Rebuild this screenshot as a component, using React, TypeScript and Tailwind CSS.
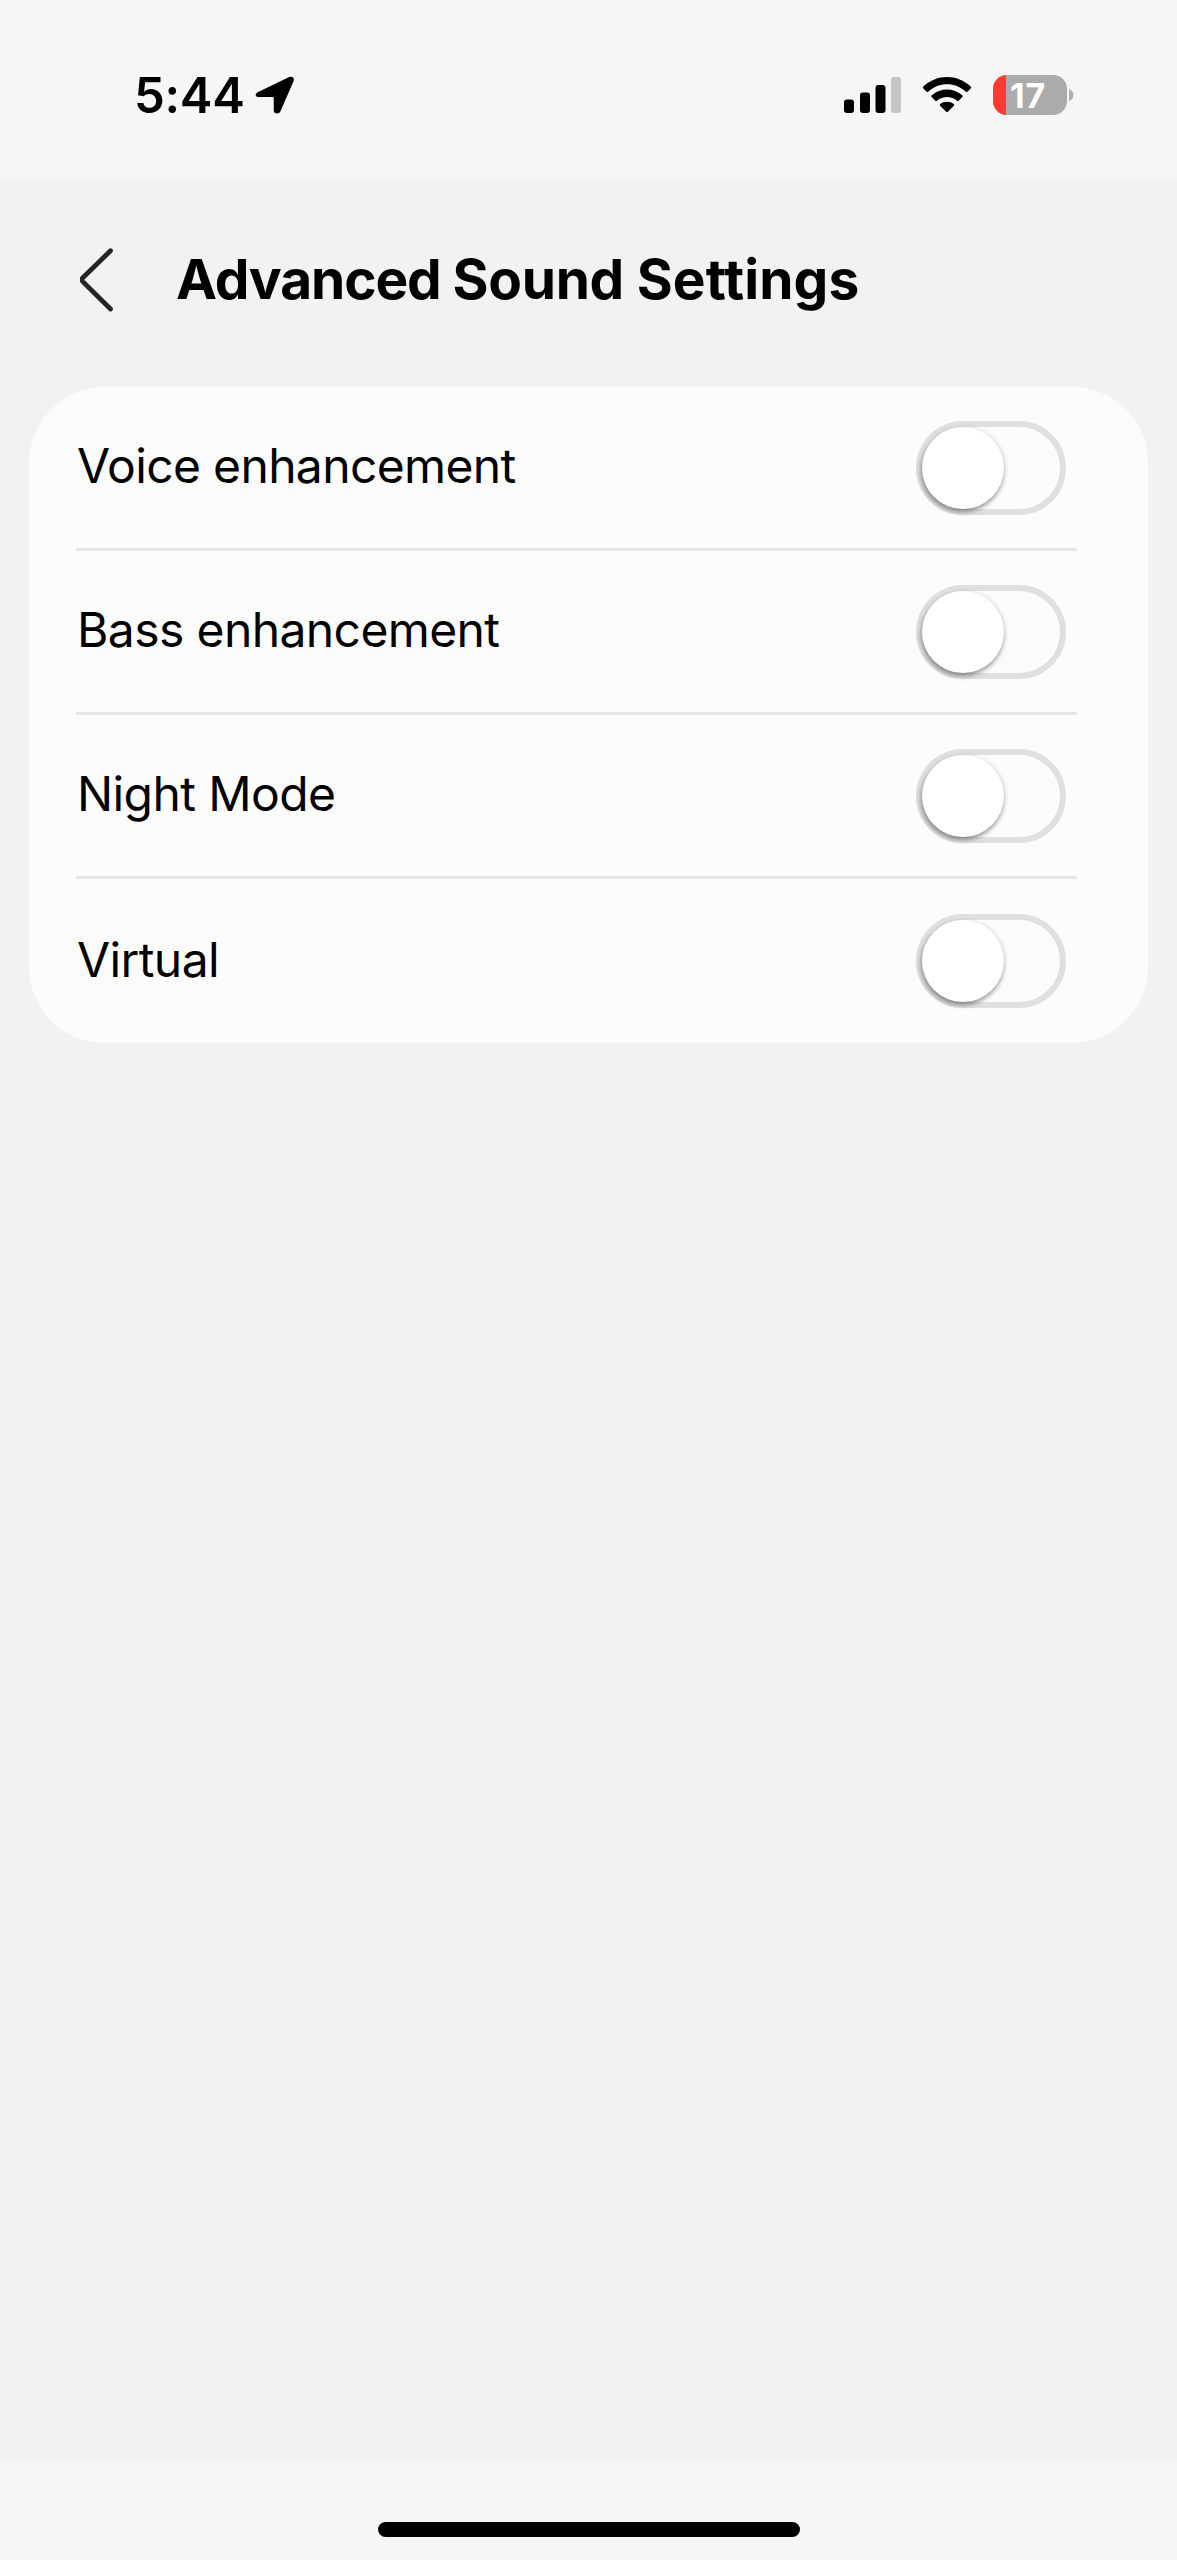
import { useState } from 'react';

type Setting = {
    id: string;
    label: string;
    labelClass: string;
};

const SETTINGS: Setting[] = [
    { id: 'voice', label: 'Voice enhancement', labelClass: 'tracking-[-0.65px]' },
    { id: 'bass', label: 'Bass enhancement', labelClass: 'tracking-[-0.6px]' },
    { id: 'night', label: 'Night Mode', labelClass: 'tracking-[-0.6px]' },
    { id: 'virtual', label: 'Virtual', labelClass: 'tracking-[-0.6px]' },
];

function StatusBar() {
    return (
        <header className="flex h-[181px] items-start justify-between bg-[#f6f6f6] pt-[75px] pr-[103px] pl-[134px]">
            <div className="flex h-10 items-center">
                <span className="pt-0.5 text-[49px] leading-10 font-semibold tracking-[-0.3px]">5:44</span>
                <svg className="ml-[10px] h-[38px] w-[40px]" viewBox="0 0 38 38" preserveAspectRatio="none">
                    <path
                        d="M3.500 15.800 32 1.200c3.400-1.500 6 .9 4.500 4.200L24.200 35.200c-1.400 3.500-6.400 2.700-6.400-1V22.300c0-.8-.4-1.200-1.200-1.200H4C-.2 21.100-.5 17.600 3.500 15.800Z"
                        fill="#000"
                    />
                </svg>
            </div>

            <div className="flex h-10 items-center">
                <svg className="h-9 w-[58px]" viewBox="0 0 58 36">
                    <rect x="0" y="22.500" width="10" height="13.500" rx="3" />
                    <rect x="16" y="15.500" width="10" height="20.500" rx="3" />
                    <rect x="31.500" y="8" width="10" height="28" rx="3" />
                    <rect x="47" y="0" width="10" height="36" rx="3" fill="#c4c4c4" />
                </svg>
                <svg className="ml-[20px] h-9 w-[50px]" viewBox="0 0 50 36">
                    <path d="M1.300 9.600C14.600-3.200 35.400-3.200 48.700 9.600c.6.600.6 1.100.1 1.600l-3.400 3.500c-.5.500-1 .5-1.600 0-10.700-9.900-26.900-9.900-37.600 0-.6.500-1.100.5-1.600 0l-3.400-3.500c-.5-.5-.5-1 .1-1.600Z" />
                    <path d="M9.800 18.300c8.600-7.700 21.800-7.700 30.400 0 .6.500.6 1.100.1 1.600l-3.700 3.800c-.5.500-1 .5-1.500.1-5.800-5-14.400-5-20.200 0-.5.400-1 .4-1.500-.1l-3.700-3.800c-.5-.5-.5-1.100.1-1.600Z" />
                    <path d="M18.200 27.100c4-3.200 9.600-3.200 13.600 0 .6.500.6 1 .1 1.600l-6 6.100c-.6.600-1.200.6-1.800 0l-6-6.100c-.5-.6-.5-1.100.1-1.600Z" />
                </svg>
                <div className="ml-[21px] flex h-10 w-[74px] items-center overflow-hidden rounded-[14px] bg-[#ababab]">
                    <div className="h-full w-[13px] bg-[#ff3b30]" />
                    <span className="ml-1 pt-px text-[34px] leading-10 font-bold tracking-[0.8px] text-white">17</span>
                </div>
                <svg className="ml-[2px] h-3 w-[5px]" viewBox="0 0 5 12">
                    <path d="M0 0c6 2 6 10 0 12Z" fill="#b0b0b0" />
                </svg>
            </div>
        </header>
    );
}

function Toggle({ label, checked, onChange }: { label: string; checked: boolean; onChange: () => void }) {
    return (
        <button
            type="button"
            role="switch"
            aria-checked={checked}
            aria-label={label}
            onClick={onChange}
            className={`flex h-[94px] w-[150px] shrink-0 items-center rounded-full border-[6px] ${
                checked ? 'justify-end border-[#34c759] bg-[#34c759]' : 'border-[#e0e0e0]'
            }`}
        >
            <span className="size-[82px] shrink-0 rounded-full bg-white shadow-[-1px_3px_5px_rgba(0,0,0,0.4),2px_0px_5px_rgba(0,0,0,0.07)]" />
        </button>
    );
}

export default function App() {
    const [enabled, setEnabled] = useState<Record<string, boolean>>({});

    const toggle = (id: string) => setEnabled((prev) => ({ ...prev, [id]: !prev[id] }));

    return (
        <div className="flex h-[2560px] w-[1177px] flex-col bg-[#f2f2f2] font-['Inter',sans-serif] text-black">
            <StatusBar />

            <main className="flex-1">
                <div className="flex h-[206px] items-center pb-[9px] pl-[80px]">
                    <button type="button" aria-label="Back">
                        <svg className="h-[64px] w-[34px]" viewBox="0 0 34 64" fill="none">
                            <path
                                d="M30.500 2.800 2.800 29.800Q.9 31.700 2.800 33.600L30.500 61"
                                stroke="#252525"
                                strokeWidth="4.800"
                                strokeLinecap="round"
                            />
                        </svg>
                    </button>
                    <h1 className="ml-[62px] text-[55px] leading-none font-bold whitespace-nowrap">
                        <span className="tracking-[-1.1px]">Advanced </span>
                        <span className="tracking-[-0.3px]">Sound </span>
                        <span className="tracking-[0.1px]">Settings</span>
                    </h1>
                </div>

                <section className="mx-[29px] rounded-[76px] bg-[#fcfcfc] pr-[71px] pl-[47px]">
                    {SETTINGS.map((item) => (
                        <div
                            key={item.id}
                            className="flex h-[164px] items-center justify-between border-b-[3px] border-[#e7e7e9] pr-[11px] pl-px last:border-b-0"
                        >
                            <span className={`pb-[3px] text-[48px] leading-none ${item.labelClass}`}>{item.label}</span>
                            <Toggle
                                label={item.label}
                                checked={!!enabled[item.id]}
                                onChange={() => toggle(item.id)}
                            />
                        </div>
                    ))}
                </section>
            </main>

            <footer className="flex h-[100px] items-end justify-center bg-[#f6f6f6] pb-[23px]">
                <div className="h-[15px] w-[422px] rounded-full bg-black" />
            </footer>
        </div>
    );
}
